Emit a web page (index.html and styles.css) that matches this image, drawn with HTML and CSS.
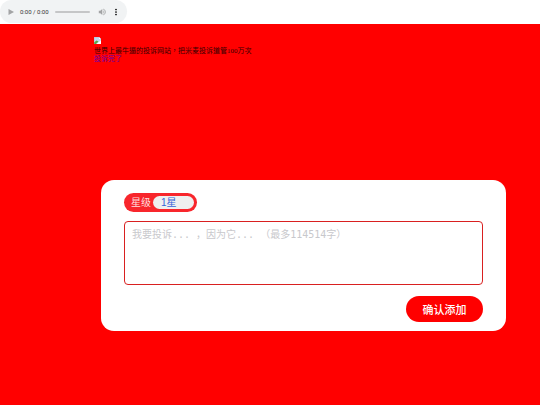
FILE: index.html
```html
<!DOCTYPE html>
<html lang="zh-CN">
<head>
<meta charset="utf-8">
<meta name="viewport" content="width=device-width, initial-scale=1">
<title>投诉网站</title>
<link rel="stylesheet" href="styles.css">
</head>
<body>
<header class="topbar">
  <div class="player">
    <button class="player-btn play" type="button" aria-label="播放"><svg viewBox="0 0 8 8"><path d="M1.500 1v6L7 4z" fill="#a3a4a5"/></svg></button>
    <span class="time">0:00 / 0:00</span>
    <input class="seek" type="range" min="0" max="100" value="0" aria-label="进度">
    <button class="player-btn volume" type="button" aria-label="音量"><svg viewBox="0 0 8 8"><path d="M.8 2.800v2.400h1.500L4.300 7V1L2.300 2.800z" fill="#a3a4a5"/><path d="M5.200 2.700a1.500 1.500 0 0 1 0 2.600M5.200 1.100a3 3 0 0 1 0 5.800" fill="none" stroke="#a3a4a5" stroke-width=".8"/></svg></button>
    <button class="player-btn more" type="button" aria-label="更多"><svg viewBox="0 0 8 8"><circle cx="4" cy="1.500" r=".85"/><circle cx="4" cy="4" r=".85"/><circle cx="4" cy="6.500" r=".85"/></svg></button>
  </div>
</header>
<main class="page">
  <section class="intro">
    <svg class="broken" viewBox="0 0 7 7" aria-hidden="true"><path d="M0 0h5l2 2v5H0z" fill="#c4d5ef"/><path d="M5 0v2h2z" fill="#fff"/><path d="M0 7V5.500L2.500 3.500l2 1L2 7z" fill="#5aa845"/><path d="M2.500 7L7 3.500V7z" fill="#fff"/><path d="M0 7V0h5l2 2" fill="none" stroke="#aaa" stroke-width=".5"/></svg>
    <p class="tagline">世界上最牛逼的投诉网站，把米麦投诉道管100万次</p>
    <a class="done" href="#">投诉完了</a>
  </section>
  <form class="card">
    <div class="rating">
      <label for="stars">星级</label>
      <select id="stars"><option>1星</option><option>2星</option><option>3星</option></select>
    </div>
    <textarea class="message" aria-label="投诉内容" placeholder="我要投诉... ，因为它... （最多114514字）"></textarea>
    <button class="submit" type="button">确认添加</button>
  </form>
</main>
</body>
</html>
```
FILE: styles.css
```css
* {
  box-sizing: border-box;
}

body {
  margin: 0;
  min-height: 100vh;
  display: flex;
  flex-direction: column;
  background: #fff;
  font-family: "Liberation Serif", "Noto Sans CJK TC", serif;
}

.topbar {
  height: 24px;
}

.player {
  width: 127px;
  height: 23px;
  display: flex;
  align-items: center;
  padding: 0 7px;
  border-radius: 12px;
  background: #f1f3f4;
}

.player-btn {
  flex: none;
  width: 8px;
  height: 8px;
  padding: 0;
  border: 0;
  background: none;
}

.player-btn svg {
  display: block;
}

.time {
  flex: none;
  margin: 0 6px 0 5px;
  font: 6px/8px Roboto, sans-serif;
  color: #333;
}

.seek {
  appearance: none;
  flex: 1;
  min-width: 0;
  height: 2px;
  margin: 0;
  border-radius: 1px;
  background: #c5c6c7;
}

.seek::-webkit-slider-thumb {
  appearance: none;
  width: 0;
  height: 0;
}

.volume {
  margin: 0 6px 0 8px;
}

.page {
  flex: 1;
  padding: 13px 34px 24px 94px;
  background: #f00;
}

.intro {
  height: 143px;
  font-size: 7px;
  line-height: 8px;
}

.broken {
  display: block;
  width: 7px;
  height: 7px;
  margin-bottom: 3px;
}

/* Keeps the full-width comma centred in its cell. */
.tagline,
.message {
  font-feature-settings: "locl" 0;
}

.tagline {
  margin: 0;
  color: #300;
}

.done {
  display: block;
  width: fit-content;
  color: #60a;
  text-decoration: none;
}

.card {
  display: flex;
  flex-direction: column;
  margin-left: 7px;
  padding: 13px 23px 9px;
  border-radius: 13px;
  background: #fff;
}

.rating {
  align-self: flex-start;
  display: flex;
  align-items: center;
  gap: 2px;
  height: 19px;
  padding: 0 3px 0 7px;
  border-radius: 10px;
  background: #f8262c;
  color: #fdd;
  font: 10px/18px "Liberation Sans", "Noto Sans CJK SC", sans-serif;
}

.rating select {
  appearance: none;
  width: 41px;
  height: 13px;
  padding: 0 8px;
  border: 0;
  border-radius: 7px;
  background: #efefef;
  color: #3763d8;
  font: 10px/13px "Liberation Sans", "Noto Sans CJK SC", sans-serif;
}

.message {
  height: 64px;
  margin: 9px 0 11px;
  padding: 5px 7px;
  border: 1px solid #d92020;
  border-radius: 4px;
  resize: none;
  background: #fff;
  font: 10px/16px "DejaVu Sans Mono", "Noto Sans CJK TC", monospace;
}

.message::placeholder {
  color: #c8c8cc;
}

.submit {
  align-self: flex-end;
  width: 77px;
  height: 26px;
  padding: 0;
  border: 0;
  border-radius: 13px;
  background: #f00;
  color: #fff;
  font: 500 11px/26px "Noto Sans CJK SC", sans-serif;
}
```
